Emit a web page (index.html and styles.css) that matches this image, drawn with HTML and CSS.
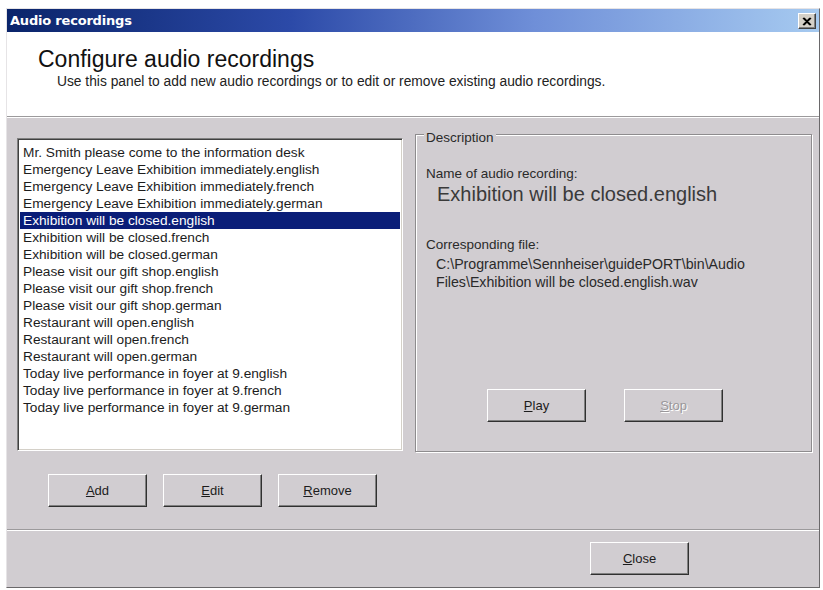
FILE: index.html
```html
<!DOCTYPE html>
<html>
<head>
<meta charset="utf-8">
<link rel="stylesheet" href="styles.css">
</head>
<body>
<div class="window">
  <div class="titlebar">
    <span class="title">Audio recordings</span>
    <span class="xbtn"><svg width="10" height="9" viewBox="0 0 10 9"><path d="M1 1 L8 8 M8 1 L1 8 M2 1 L9 8 M9 1 L2 8" stroke="#000" stroke-width="1.3" fill="none"/></svg></span>
  </div>
  <div class="header">
    <div class="h1">Configure audio recordings</div>
    <div class="sub">Use this panel to add new audio recordings or to edit or remove existing audio recordings.</div>
  </div>
  <div class="main">
    <div class="leftcol">
      <div class="listbox">
        <div class="item">Mr. Smith please come to the information desk</div>
        <div class="item">Emergency Leave Exhibition immediately.english</div>
        <div class="item">Emergency Leave Exhibition immediately.french</div>
        <div class="item">Emergency Leave Exhibition immediately.german</div>
        <div class="item sel">Exhibition will be closed.english</div>
        <div class="item">Exhibition will be closed.french</div>
        <div class="item">Exhibition will be closed.german</div>
        <div class="item">Please visit our gift shop.english</div>
        <div class="item">Please visit our gift shop.french</div>
        <div class="item">Please visit our gift shop.german</div>
        <div class="item">Restaurant will open.english</div>
        <div class="item">Restaurant will open.french</div>
        <div class="item">Restaurant will open.german</div>
        <div class="item">Today live performance in foyer at 9.english</div>
        <div class="item">Today live performance in foyer at 9.french</div>
        <div class="item">Today live performance in foyer at 9.german</div>
      </div>
      <div class="btnrow">
        <div class="btn"><u>A</u>dd</div>
        <div class="btn"><u>E</u>dit</div>
        <div class="btn"><u>R</u>emove</div>
      </div>
    </div>
    <div class="group">
      <span class="legend">Description</span>
      <div class="lbl">Name of audio recording:</div>
      <div class="name">Exhibition will be closed.english</div>
      <div class="lbl lbl2">Corresponding file:</div>
      <div class="path">C:\Programme\Sennheiser\guidePORT\bin\Audio<br>Files\Exhibition will be closed.english.wav</div>
      <div class="playrow">
        <div class="btn"><u>P</u>lay</div>
        <div class="btn disabled"><u>S</u>top</div>
      </div>
    </div>
  </div>
  <div class="footer">
    <div class="btn"><u>C</u>lose</div>
  </div>
</div>
</body>
</html>
```
FILE: styles.css
```css
html, body {
  margin: 0;
  padding: 0;
  background: #ffffff;
}
body {
  font-family: "Liberation Sans", Arial, sans-serif;
  color: #1c1c1c;
}
.window {
  box-sizing: border-box;
  margin: 8px 0 0 6px;
  width: 814px;
  height: 580px;
  background: #d1cdd1;
  border: 1px solid;
  border-color: #e6e4e6 #6a686a #6a686a #e6e4e6;
  display: flex;
  flex-direction: column;
}
.titlebar {
  height: 23px;
  flex: none;
  background: linear-gradient(to right, #0a246a 0%, #2c4aa8 35%, #6f8fd8 65%, #a6caf0 100%);
  display: flex;
  align-items: center;
  justify-content: space-between;
  padding: 0 3px 0 3px;
}
.title {
  color: #ffffff;
  font-weight: bold;
  font-family: "DejaVu Sans", "Liberation Sans", sans-serif;
  font-size: 13px;
  letter-spacing: -0.2px;
}
.xbtn {
  box-sizing: border-box;
  width: 18px;
  height: 16px;
  background: #d4d0c8;
  border: 1px solid;
  border-color: #ffffff #404040 #404040 #ffffff;
  box-shadow: inset -1px -1px #808080;
  display: flex;
  align-items: center;
  justify-content: center;
  margin-top: 1px;
}
.header {
  flex: none;
  height: 85px;
  box-sizing: border-box;
  background: #ffffff;
  border-bottom: 1px solid #9c9a9c;
  padding: 14px 0 0 31px;
}
.h1 {
  font-size: 23px;
  line-height: 26px;
  color: #111111;
}
.sub {
  font-size: 13.8px;
  line-height: 16px;
  margin: 2px 0 0 19px;
  color: #222222;
}
.main {
  flex: none;
  height: 413px;
  box-sizing: border-box;
  border-top: 1px solid #ffffff;
  border-bottom: 1px solid #9c9a9c;
  display: flex;
  gap: 12px;
  padding: 16px 0 0 10px;
}
.leftcol {
  display: flex;
  flex-direction: column;
}
.listbox {
  box-sizing: border-box;
  margin-top: 4px;
  width: 386px;
  height: 313px;
  background: #ffffff;
  border: 1px solid;
  border-color: #808080 #ffffff #ffffff #808080;
  box-shadow: inset 1px 1px #404040, inset -1px -1px #d4d0c8;
  padding: 5px 2px 0 2px;
}
.item {
  height: 17px;
  line-height: 17px;
  font-size: 13.7px;
  padding-left: 3px;
  white-space: nowrap;
  color: #1c1c1c;
}
.item.sel {
  background: #0a1e78;
  color: #ffffff;
}
.btnrow {
  display: flex;
  gap: 16px;
  margin: 23px 0 0 31px;
}
.btn {
  box-sizing: border-box;
  width: 99px;
  height: 33px;
  background: #d1cdd1;
  border: 1px solid;
  border-color: #ffffff #303030 #303030 #ffffff;
  box-shadow: inset -1px -1px #808080;
  display: flex;
  align-items: center;
  justify-content: center;
  font-size: 13px;
  color: #1c1c1c;
}
.btn.disabled {
  color: #9a979a;
  text-shadow: 1px 1px #ffffff;
}
.group {
  position: relative;
  box-sizing: border-box;
  width: 397px;
  height: 318px;
  border: 1px solid #8e8c8e;
  box-shadow: inset 1px 1px #ffffff, 1px 1px #ffffff;
  padding: 31px 0 0 10px;
}
.legend {
  position: absolute;
  left: 8px;
  top: -5px;
  padding: 0 2px;
  background: #d1cdd1;
  font-size: 13.5px;
  line-height: 16px;
  color: #2a2a2a;
}
.lbl {
  font-size: 13.5px;
  line-height: 16px;
  color: #2a2a2a;
}
.name {
  font-size: 20px;
  line-height: 23px;
  margin: 1px 0 0 11px;
  color: #3a3a3a;
}
.lbl2 {
  margin-top: 31px;
}
.path {
  font-size: 14.2px;
  line-height: 18px;
  margin: 2px 0 0 10px;
  color: #2a2a2a;
}
.playrow {
  display: flex;
  gap: 38px;
  margin: 98px 0 0 61px;
}
.footer {
  flex: 1;
  border-top: 1px solid #ffffff;
  display: flex;
  justify-content: flex-end;
  padding: 11px 130px 0 0;
}
```
